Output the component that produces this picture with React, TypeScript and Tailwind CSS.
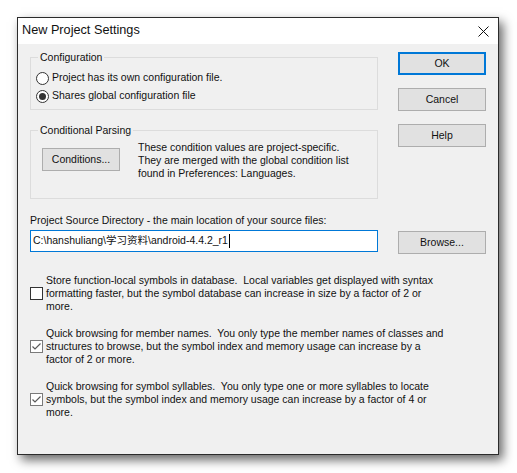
import { useState } from 'react';

const CheckOption = ({ checked, lines }: { checked: boolean; lines: string[] }) => (
  <div className="flex items-center gap-[3px]">
    <span
      className={`w-[13px] h-[13px] shrink-0 bg-white border flex items-center justify-center ${
        checked ? 'border-[#7a7a7a]' : 'border-[#333333]'
      }`}
    >
      {checked && (
        <svg width="11" height="11" viewBox="0 0 11 11">
          <path d="M1.5 5.5 L4 8 L9.5 2.5" fill="none" stroke="#5a5a5a" strokeWidth="1.2" />
        </svg>
      )}
    </span>
    <div className="leading-[13px]">
      {lines.map((l, i) => (
        <div key={i} className="whitespace-pre">{l}</div>
      ))}
    </div>
  </div>
);

const Radio = ({ checked, label, onClick }: { checked: boolean; label: string; onClick: () => void }) => (
  <div className="h-[18px] flex items-center gap-[3px] cursor-default" onClick={onClick}>
    <span className="w-[13px] h-[13px] rounded-full border border-[#333333] bg-white flex items-center justify-center">
      {checked && <span className="w-[7px] h-[7px] rounded-full bg-[#333333]" />}
    </span>
    <span>{label}</span>
  </div>
);

const Button = ({ label, primary, className = '' }: { label: string; primary?: boolean; className?: string }) => (
  <button
    className={`w-[88px] h-[23px] bg-[#e1e1e1] flex items-center justify-center ${
      primary ? 'border-2 border-[#0078d7]' : 'border border-[#adadad]'
    } ${className}`}
  >
    {label}
  </button>
);

export default function App() {
  const [shared, setShared] = useState(true);

  return (
    <div className="min-h-screen bg-white pt-[17px] pl-[17px] font-['Liberation_Sans',sans-serif] text-[10.5px] text-[#111]">
      <div className="w-[482px] h-[438px] border border-[#2b2b2b] bg-[#f0f0f0] shadow-[4px_5px_10px_rgba(0,0,0,0.6)] flex flex-col">
        {/* Title bar */}
        <div className="h-[26px] bg-white flex items-center justify-between pl-[4px] pr-[9px]">
          <span className="text-[12.7px]">New Project Settings</span>
          <svg width="11" height="11" viewBox="0 0 11 11">
            <path d="M0.5 0.5 L10.5 10.5 M10.5 0.5 L0.5 10.5" stroke="#111" strokeWidth="1" />
          </svg>
        </div>

        <div className="px-[12px]">
          <div className="flex justify-between">
            {/* Left column */}
            <div className="w-[348px] pt-[7px]">
              <fieldset className="border border-[#dcdcdc] px-[5px] pt-[5px] pb-[4px]">
                <legend className="ml-[2px] px-[2px] leading-[13px]">Configuration</legend>
                <Radio checked={!shared} label="Project has its own configuration file." onClick={() => setShared(false)} />
                <Radio checked={shared} label="Shares global configuration file" onClick={() => setShared(true)} />
              </fieldset>

              <fieldset className="mt-[14px] border border-[#dcdcdc] pl-[11px] pt-[4px] pb-[18px]">
                <legend className="ml-[-4px] px-[2px] leading-[13px]">Conditional Parsing</legend>
                <div className="flex items-start gap-[18px]">
                  <button className="mt-[7px] w-[78px] h-[23px] bg-[#e1e1e1] border border-[#adadad]">Conditions...</button>
                  <div className="leading-[13px]">
                    <div>These condition values are project-specific.</div>
                    <div>They are merged with the global condition list</div>
                    <div>found in Preferences: Languages.</div>
                  </div>
                </div>
              </fieldset>
            </div>

            {/* Right column */}
            <div className="pt-[8px] flex flex-col gap-[13px]">
              <Button label="OK" primary />
              <Button label="Cancel" />
              <Button label="Help" />
            </div>
          </div>

          {/* Source directory */}
          <div className="mt-[15px] leading-[13px]">Project Source Directory - the main location of your source files:</div>
          <div className="mt-[3px] flex justify-between items-start">
            <div className="w-[348px] h-[22px] bg-white border border-[#0078d7] flex items-center pl-[2px]">
              <span className="font-['Liberation_Sans','Noto_Sans_CJK_SC',sans-serif]">C:\hanshuliang\学习资料\android-4.4.2_r1</span>
              <span className="w-px h-[14px] bg-black ml-[1px]" />
            </div>
            <Button label="Browse..." className="mt-[1px]" />
          </div>

          {/* Options */}
          <div className="mt-[20px] flex flex-col gap-[14px]">
            <CheckOption
              checked={false}
              lines={[
                'Store function-local symbols in database.  Local variables get displayed with syntax',
                'formatting faster, but the symbol database can increase in size by a factor of 2 or',
                'more.',
              ]}
            />
            <CheckOption
              checked
              lines={[
                'Quick browsing for member names.  You only type the member names of classes and',
                'structures to browse, but the symbol index and memory usage can increase by a',
                'factor of 2 or more.',
              ]}
            />
            <CheckOption
              checked
              lines={[
                'Quick browsing for symbol syllables.  You only type one or more syllables to locate',
                'symbols, but the symbol index and memory usage can increase by a factor of 4 or',
                'more.',
              ]}
            />
          </div>
        </div>
      </div>
    </div>
  );
}
